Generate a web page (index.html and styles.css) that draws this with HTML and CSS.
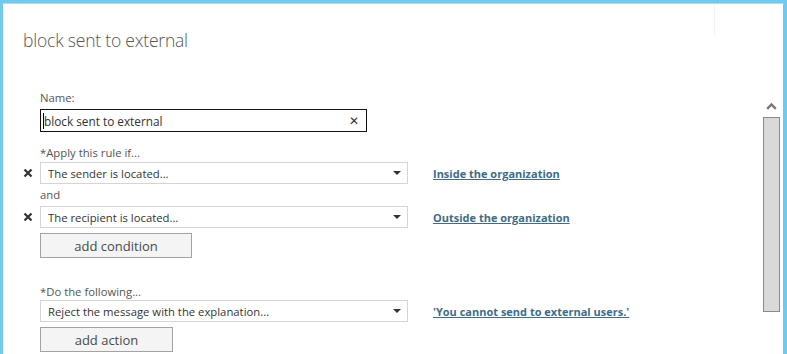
FILE: index.html
```html
<!DOCTYPE html>
<html lang="en">
<head>
    <meta charset="UTF-8">
    <title>block sent to external</title>
    <link rel="stylesheet" href="styles.css">
</head>
<body>

    <div class="ventana">
        <div class="marco">
            <div class="cabecera">
                <h1 class="titulo">block sent to external</h1>
                <span class="separador"></span>
            </div>

            <div class="cuerpo">
                <div class="formulario">
                    <label class="etiqueta etiqueta-nombre">Name:</label>
                    <div class="campo-nombre">
                        <span class="valor">block sent to external</span>
                        <span class="limpiar">&#x2715;</span>
                    </div>

                    <div class="etiqueta etiqueta-regla">*Apply this rule if...</div>
                    <div class="fila">
                        <span class="quitar">
                            <svg width="10" height="10" viewBox="0 0 10 10"><path d="M1.5 1.5 L8.5 8.5 M8.5 1.5 L1.5 8.5" stroke="#333" stroke-width="2.2"/></svg>
                        </span>
                        <div class="desplegable">
                            <span>The sender is located...</span>
                            <span class="flecha"></span>
                        </div>
                        <a class="enlace" href="#">Inside the organization</a>
                    </div>

                    <div class="etiqueta etiqueta-y">and</div>
                    <div class="fila">
                        <span class="quitar">
                            <svg width="10" height="10" viewBox="0 0 10 10"><path d="M1.5 1.5 L8.5 8.5 M8.5 1.5 L1.5 8.5" stroke="#333" stroke-width="2.2"/></svg>
                        </span>
                        <div class="desplegable">
                            <span>The recipient is located...</span>
                            <span class="flecha"></span>
                        </div>
                        <a class="enlace" href="#">Outside the organization</a>
                    </div>
                    <button class="boton boton-condicion">add condition</button>

                    <div class="etiqueta etiqueta-accion">*Do the following...</div>
                    <div class="fila">
                        <span class="quitar"></span>
                        <div class="desplegable">
                            <span>Reject the message with the explanation...</span>
                            <span class="flecha"></span>
                        </div>
                        <a class="enlace" href="#">'You cannot send to external users.'</a>
                    </div>
                    <button class="boton boton-accion">add action</button>
                </div>

                <div class="barra">
                    <svg class="chevron" width="11" height="8" viewBox="0 0 11 8"><path d="M1.2 6.8 L5.5 2.5 L9.8 6.8" fill="none" stroke="#777" stroke-width="2.4"/></svg>
                    <div class="pulgar"></div>
                </div>
            </div>
        </div>
    </div>

</body>
</html>
```

FILE: styles.css
```css
:root {
    --azul-borde: #6ccbee;
    --gris-linea: #a9b4b9;
    --texto: #333;
    --texto-suave: #555;
    --enlace: #3f6b85;
}

body {
    margin: 0;
    background: #fff;
    font-family: 'Open Sans', 'Noto Sans', sans-serif;
    color: var(--texto);
    overflow: hidden;
}

.ventana {
    height: 354px;
    border-top: 3px solid var(--azul-borde);
    border-left: 3px solid var(--azul-borde);
    border-right: 3px solid var(--azul-borde);
    box-sizing: border-box;
}

.marco {
    height: 100%;
    border-top: 1px solid #b8d8e6;
    border-right: 1px solid var(--gris-linea);
    box-sizing: border-box;
}

/* Cabecera */
.cabecera {
    display: flex;
    height: 58px;
}

.titulo {
    margin: 0;
    padding: 23px 0 0 20px;
    font-size: 17.5px;
    font-weight: 300;
    letter-spacing: -0.2px;
    color: var(--texto-suave);
    line-height: 26px;
}

.separador {
    margin-left: auto;
    margin-right: 68px;
    width: 1px;
    height: 31px;
    background: #f2f2f2;
}

/* Cuerpo */
.cuerpo {
    display: flex;
}

.formulario {
    flex: 1;
    padding: 28px 0 0 37px;
}

.etiqueta {
    font-size: 11.3px;
    line-height: 16px;
    color: var(--texto-suave);
}

.etiqueta-nombre {
    display: block;
    margin-bottom: 3px;
}

.campo-nombre {
    display: flex;
    align-items: center;
    justify-content: space-between;
    width: 327px;
    height: 23px;
    border: 1px solid #111;
    box-sizing: border-box;
    padding: 0 7px 0 2px;
    font-size: 11.8px;
}

.campo-nombre .valor {
    border-left: 1px solid #000;
}

.limpiar {
    font-size: 12px;
    color: #333;
}

.etiqueta-regla {
    margin-top: 13px;
    margin-bottom: 1px;
}

.etiqueta-y {
    margin-top: 3px;
    margin-bottom: 3px;
}

.etiqueta-accion {
    margin-top: 26px;
    margin-bottom: 0;
}

.fila {
    display: flex;
    align-items: center;
    margin-left: -17px;
}

.quitar {
    width: 17px;
    display: flex;
    align-items: center;
}

.desplegable {
    display: flex;
    align-items: center;
    justify-content: space-between;
    width: 368px;
    height: 22px;
    border: 1px solid #d4d4d4;
    box-sizing: border-box;
    padding: 0 6px 0 7px;
    font-size: 11.3px;
    color: var(--texto);
}

.flecha {
    width: 0;
    height: 0;
    border-left: 4px solid transparent;
    border-right: 4px solid transparent;
    border-top: 4px solid #333;
}

.enlace {
    margin-left: 25px;
    font-size: 11px;
    font-weight: 700;
    color: var(--enlace);
    text-decoration: underline;
}

.boton {
    display: block;
    height: 25px;
    margin-top: 5px;
    border: 1px solid #a3a3a3;
    background: #f4f4f4;
    font-family: inherit;
    font-size: 13px;
    color: #4a4a4a;
    padding: 0;
}

.boton-condicion {
    width: 152px;
}

.boton-accion {
    width: 133px;
}

/* Barra de desplazamiento */
.barra {
    width: 24px;
    padding-top: 40px;
    display: flex;
    flex-direction: column;
    align-items: center;
}

.chevron {
    margin-left: 1px;
}

.pulgar {
    margin-top: 7px;
    width: 17px;
    height: 195px;
    background: #d9d9d9;
    border: 1px solid #8a8a8a;
    box-sizing: border-box;
}
```
